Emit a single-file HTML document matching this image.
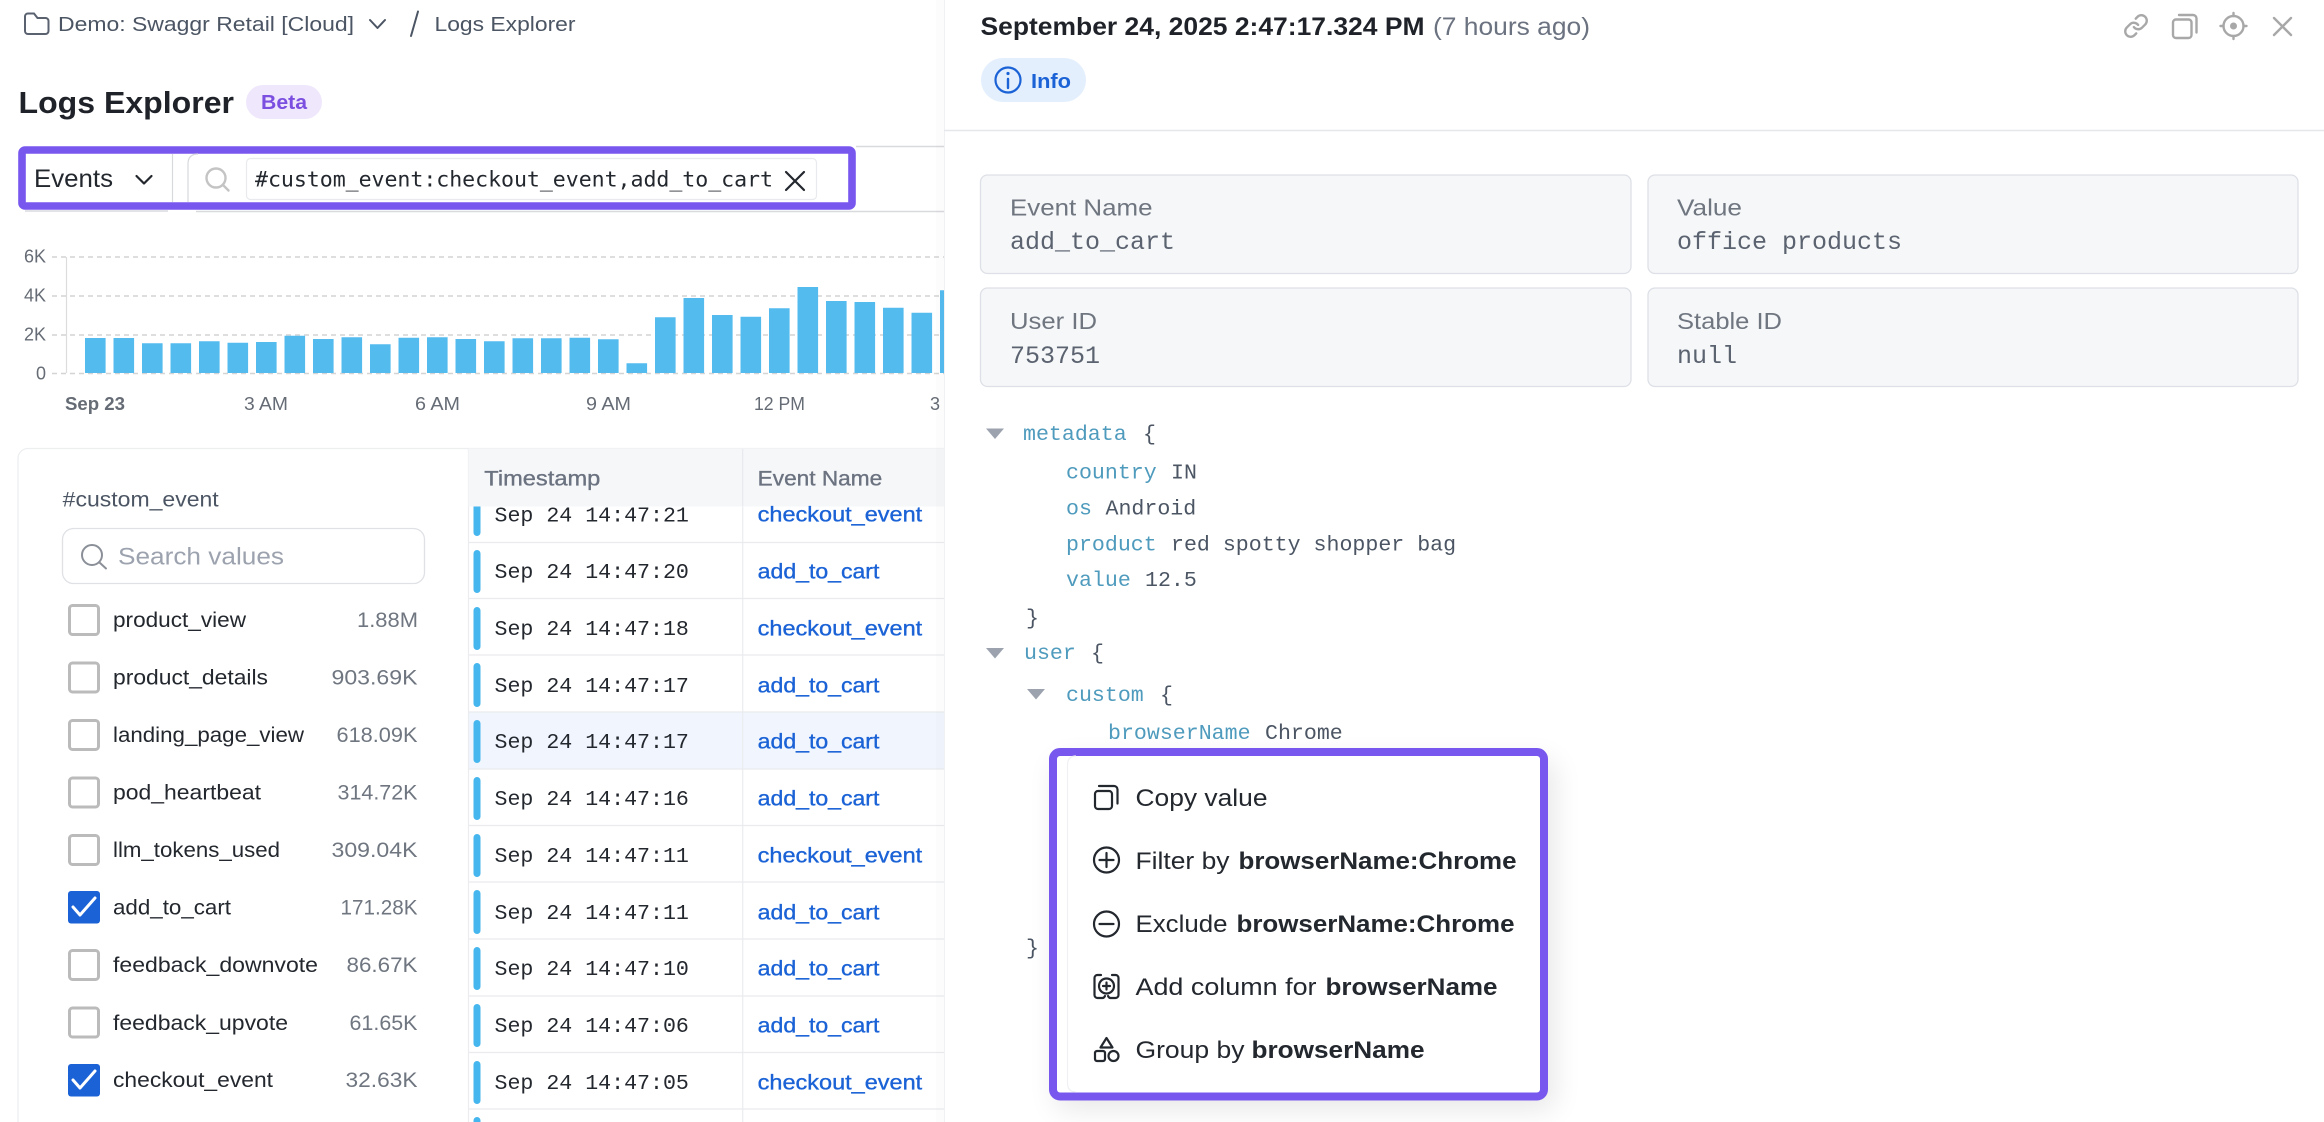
<!DOCTYPE html>
<html lang="en">
<head>
<meta charset="utf-8">
<title>Logs Explorer</title>
<style>
html,body{margin:0;padding:0;background:#fff;width:2324px;height:1122px;overflow:hidden}
svg{display:block}
text{font-family:"Liberation Sans",sans-serif;white-space:pre}
.m{font-family:"Liberation Mono",monospace;font-size:21.6px}
.tk{font-family:"DejaVu Sans Mono",monospace;font-size:21.6px}
.k{fill:#4f9bbd}.v{fill:#4b5563}
.t{fill:#23272e}.ev{fill:#1a62d6;font-size:21px;stroke:#1a62d6;stroke-width:.35}
.hd{fill:#6b7280;font-size:21px;stroke:#6b7280;stroke-width:.35}
.it{fill:#23272e;font-size:21px}.ct{fill:#6f7680;font-size:21px}
.lb{fill:#6f7680;font-size:23px}.vl{fill:#5b6370;font-family:"Liberation Mono",monospace;font-size:25px}
.mn{fill:#23272e;font-size:24px}.mb{fill:#23272e;font-size:24px;font-weight:700}
.ax{fill:#666c75;font-size:18px}
.ic{fill:none;stroke:#23272e;stroke-width:2.2;stroke-linecap:round;stroke-linejoin:round}
.tc{fill:none;stroke:#a8a8a8;stroke-width:2.4;stroke-linecap:round;stroke-linejoin:round}
</style>
</head>
<body>
<svg width="2324" height="1122" viewBox="0 0 2324 1122" xmlns="http://www.w3.org/2000/svg">
<defs><filter id="sh" x="-15%" y="-15%" width="130%" height="130%"><feGaussianBlur stdDeviation="14"/></filter></defs>
<rect width="2324" height="1122" fill="#fff"/>

<!-- breadcrumb -->
<path d="M25 16.500a3 3 0 0 1 3-3h6l3.500 4.500h8a3 3 0 0 1 3 3v10a3 3 0 0 1-3 3H28a3 3 0 0 1-3-3z" fill="none" stroke="#5a6270" stroke-width="2"/>
<text x="58" y="31" font-size="20" fill="#4b5563" textLength="296" lengthAdjust="spacingAndGlyphs">Demo: Swaggr Retail [Cloud]</text>
<path d="M370 20l7.500 8 7.500-8" fill="none" stroke="#4b5563" stroke-width="2" stroke-linecap="round" stroke-linejoin="round"/>
<path d="M411 36l7-24.500" stroke="#4b5563" stroke-width="2" stroke-linecap="round"/>
<text x="434.500" y="31" font-size="20" fill="#4b5563" textLength="141" lengthAdjust="spacingAndGlyphs">Logs Explorer</text>

<!-- title -->
<text x="18.500" y="113" font-size="31" font-weight="700" fill="#1f2329" textLength="215.500" lengthAdjust="spacingAndGlyphs">Logs Explorer</text>
<rect x="246" y="85" width="76" height="34" rx="17" fill="#efe7fb"/>
<text x="261" y="109" font-size="20" font-weight="700" fill="#7b4fe0" textLength="46" lengthAdjust="spacingAndGlyphs">Beta</text>

<!-- filter bar -->
<path d="M856 146.500H944M856 211.500H944M196 211.500H856M25 211H168" stroke="#d8dade" stroke-width="1.500" fill="none"/>
<rect x="22" y="150" width="830" height="56" rx="3" fill="#fff" stroke="#7857ee" stroke-width="7.600"/>
<path d="M172.500 154V202" stroke="#d7d9dd" stroke-width="1.200"/>
<path d="M198 154q-10 0-10 10v38" stroke="#d7d9dd" stroke-width="1.200" fill="none"/>
<text x="34" y="187" font-size="25" fill="#23272e" textLength="79" lengthAdjust="spacingAndGlyphs">Events</text>
<path d="M136.500 176l7.500 7.500 7.500-7.500" fill="none" stroke="#23272e" stroke-width="2.200" stroke-linecap="round" stroke-linejoin="round"/>
<circle cx="216" cy="178" r="9.500" fill="none" stroke="#c4c4c4" stroke-width="2.400"/>
<path d="M223 185l5.500 5.500" stroke="#c4c4c4" stroke-width="2.400" stroke-linecap="round"/>
<rect x="246.500" y="158.500" width="570" height="41" rx="4" fill="#fff" stroke="#e8eaed" stroke-width="1.200"/>
<text class="tk" x="255" y="186.500" fill="#23272e" textLength="518">#custom_event:checkout_event,add_to_cart</text>
<path d="M786 172l18 18M804 172l-18 18" stroke="#23272e" stroke-width="2.200" stroke-linecap="round"/>

<!-- chart -->
<g stroke="#d4d4d4" stroke-width="1.500" stroke-dasharray="5 4" fill="none">
<path d="M52 257H944M52 296H944M52 335H944M52 373.500H944"/>
</g>
<path d="M66.500 257V373" stroke="#dcdcdc" stroke-width="1.200"/>
<text x="46" y="262.500" class="ax" text-anchor="end">6K</text><text x="46" y="301.500" class="ax" text-anchor="end">4K</text><text x="46" y="340.500" class="ax" text-anchor="end">2K</text><text x="46" y="379.500" class="ax" text-anchor="end">0</text>
<path fill="#54bbef" d="M85 338h20.600V373H85zM113.500 338h20.600V373h-20.600zM142 343.300h20.600V373H142zM170.500 343.300h20.600V373h-20.600zM199 341.300h20.600V373H199zM227.500 342.700h20.600V373h-20.600zM256 342h20.600V373H256zM284.500 335.700h20.600V373h-20.600zM313 339h20.600V373H313zM341.500 337.300h20.600V373h-20.600zM370 344.300h20.600V373H370zM398.500 337.700h20.600V373h-20.600zM427 337.300h20.600V373H427zM455.500 339h20.600V373h-20.600zM484 341.300h20.600V373H484zM512.500 338.300h20.600V373h-20.600zM541 338.300h20.600V373H541zM569.500 337.700h20.600V373h-20.600zM598 339.300h20.600V373H598zM626.500 363.300h20.600V373h-20.600zM655 317.300h20.600V373H655zM683.500 298h20.600V373h-20.600zM712 315h20.600V373H712zM740.500 316.700h20.600V373h-20.600zM769 308.300h20.600V373H769zM797.500 287h20.600V373h-20.600zM826 301h20.600V373H826zM854.500 302h20.600V373h-20.600zM883 307.700h20.600V373H883zM911.500 312.700h20.600V373h-20.600zM940 290.300h20.600V373H940z"/>
<text class="ax" x="65" y="410" font-weight="700" textLength="60" lengthAdjust="spacingAndGlyphs">Sep 23</text>
<text class="ax" x="244" y="410" textLength="44" lengthAdjust="spacingAndGlyphs">3 AM</text>
<text class="ax" x="415" y="410" textLength="45" lengthAdjust="spacingAndGlyphs">6 AM</text>
<text class="ax" x="586" y="410" textLength="45" lengthAdjust="spacingAndGlyphs">9 AM</text>
<text class="ax" x="754" y="410" textLength="51" lengthAdjust="spacingAndGlyphs">12 PM</text>
<text class="ax" x="930" y="410">3</text>

<!-- facet panel -->
<path d="M945 448.500H28a10 10 0 0 0-10 10V1122" fill="none" stroke="#eceef0" stroke-width="1.300"/>
<text x="62.700" y="506.700" font-size="21" fill="#4b5563" textLength="156" lengthAdjust="spacingAndGlyphs">#custom_event</text>
<rect x="62.500" y="528.500" width="362" height="55" rx="11" fill="#fff" stroke="#dfe1e5" stroke-width="1.300"/>
<circle cx="92" cy="555" r="10" fill="none" stroke="#8b9098" stroke-width="2"/>
<path d="M99.500 562.500l6.500 6" stroke="#8b9098" stroke-width="2" stroke-linecap="round"/>
<text x="118" y="564.500" font-size="24" fill="#9ca3af" textLength="166" lengthAdjust="spacingAndGlyphs">Search values</text>

<g fill="#fff" stroke="#bbb" stroke-width="3">
<rect x="69.500" y="605.500" width="29" height="29" rx="3"/>
<rect x="69.500" y="663" width="29" height="29" rx="3"/>
<rect x="69.500" y="720.500" width="29" height="29" rx="3"/>
<rect x="69.500" y="778" width="29" height="29" rx="3"/>
<rect x="69.500" y="835.500" width="29" height="29" rx="3"/>
<rect x="69.500" y="950.500" width="29" height="29" rx="3"/>
<rect x="69.500" y="1008" width="29" height="29" rx="3"/>
</g>
<rect x="68" y="891" width="32" height="32.500" rx="3" fill="#1a62d6"/>
<rect x="68" y="1064" width="32" height="32.500" rx="3" fill="#1a62d6"/>
<path d="M73 907l7 8 15-17M73 1080l7 8 15-17" fill="none" stroke="#fff" stroke-width="3" stroke-linecap="round" stroke-linejoin="round"/>

<text class="it" x="113" y="627" textLength="133" lengthAdjust="spacingAndGlyphs">product_view</text>
<text class="it" x="113" y="684.500" textLength="155" lengthAdjust="spacingAndGlyphs">product_details</text>
<text class="it" x="113" y="742" textLength="191" lengthAdjust="spacingAndGlyphs">landing_page_view</text>
<text class="it" x="113" y="799.500" textLength="148" lengthAdjust="spacingAndGlyphs">pod_heartbeat</text>
<text class="it" x="113" y="857" textLength="167" lengthAdjust="spacingAndGlyphs">llm_tokens_used</text>
<text class="it" x="113" y="914.500" textLength="118" lengthAdjust="spacingAndGlyphs">add_to_cart</text>
<text class="it" x="113" y="972" textLength="205" lengthAdjust="spacingAndGlyphs">feedback_downvote</text>
<text class="it" x="113" y="1030" textLength="175" lengthAdjust="spacingAndGlyphs">feedback_upvote</text>
<text class="it" x="113" y="1087" textLength="160" lengthAdjust="spacingAndGlyphs">checkout_event</text>

<text class="ct" x="357" y="627" textLength="61" lengthAdjust="spacingAndGlyphs">1.88M</text>
<text class="ct" x="331.500" y="684.500" textLength="86" lengthAdjust="spacingAndGlyphs">903.69K</text>
<text class="ct" x="336.500" y="742" textLength="81" lengthAdjust="spacingAndGlyphs">618.09K</text>
<text class="ct" x="337.500" y="799.500" textLength="80" lengthAdjust="spacingAndGlyphs">314.72K</text>
<text class="ct" x="331.500" y="857" textLength="86" lengthAdjust="spacingAndGlyphs">309.04K</text>
<text class="ct" x="340.500" y="914.500" textLength="77" lengthAdjust="spacingAndGlyphs">171.28K</text>
<text class="ct" x="346.500" y="972" textLength="71" lengthAdjust="spacingAndGlyphs">86.67K</text>
<text class="ct" x="349.500" y="1030" textLength="68" lengthAdjust="spacingAndGlyphs">61.65K</text>
<text class="ct" x="345.500" y="1087" textLength="72" lengthAdjust="spacingAndGlyphs">32.63K</text>

<!-- table -->
<rect x="468.500" y="712" width="476" height="57" fill="#f1f6fe"/>
<path d="M468.500 448V1122M742.700 448V1122" stroke="#eaecef" stroke-width="1.200"/>
<g stroke="#e9ebee" stroke-width="1.300">
<path d="M468 542.500H945M468 598.500H945M468 655H945M468 712H945M468 769H945M468 825.500H945M468 882H945M468 939H945M468 996H945M468 1052.500H945M468 1109H945"/>
</g>
<g fill="#45b6ee">
<rect x="473.500" y="494" width="7" height="42" rx="3.500"/>
<rect x="473.500" y="550" width="7" height="43" rx="3.500"/>
<rect x="473.500" y="607" width="7" height="43" rx="3.500"/>
<rect x="473.500" y="663" width="7" height="44" rx="3.500"/>
<rect x="473.500" y="720" width="7" height="43" rx="3.500"/>
<rect x="473.500" y="777" width="7" height="43" rx="3.500"/>
<rect x="473.500" y="834" width="7" height="43" rx="3.500"/>
<rect x="473.500" y="890" width="7" height="44" rx="3.500"/>
<rect x="473.500" y="947" width="7" height="43" rx="3.500"/>
<rect x="473.500" y="1004" width="7" height="43" rx="3.500"/>
<rect x="473.500" y="1061" width="7" height="43" rx="3.500"/>
<rect x="473.500" y="1117" width="7" height="10" rx="3.500"/>
</g>
<rect x="468.500" y="448.500" width="476" height="58" fill="#f6f7f9"/>
<path d="M742.700 449V506" stroke="#e7e9ec" stroke-width="1.200"/>
<text class="hd" x="484.300" y="485.700" textLength="116" lengthAdjust="spacingAndGlyphs">Timestamp</text>
<text class="hd" x="757.700" y="485.700" textLength="124.500" lengthAdjust="spacingAndGlyphs">Event Name</text>

<text class="m t" x="494.500" y="521.500">Sep 24 14:47:21</text>
<text class="m t" x="494.500" y="578">Sep 24 14:47:20</text>
<text class="m t" x="494.500" y="635">Sep 24 14:47:18</text>
<text class="m t" x="494.500" y="692">Sep 24 14:47:17</text>
<text class="m t" x="494.500" y="748">Sep 24 14:47:17</text>
<text class="m t" x="494.500" y="805">Sep 24 14:47:16</text>
<text class="m t" x="494.500" y="862">Sep 24 14:47:11</text>
<text class="m t" x="494.500" y="919">Sep 24 14:47:11</text>
<text class="m t" x="494.500" y="975">Sep 24 14:47:10</text>
<text class="m t" x="494.500" y="1032">Sep 24 14:47:06</text>
<text class="m t" x="494.500" y="1089">Sep 24 14:47:05</text>

<text class="ev" x="757.700" y="521.700" textLength="164.500" lengthAdjust="spacingAndGlyphs">checkout_event</text>
<text class="ev" x="757.700" y="578.500" textLength="121.700" lengthAdjust="spacingAndGlyphs">add_to_cart</text>
<text class="ev" x="757.700" y="635.500" textLength="164.500" lengthAdjust="spacingAndGlyphs">checkout_event</text>
<text class="ev" x="757.700" y="692.500" textLength="121.700" lengthAdjust="spacingAndGlyphs">add_to_cart</text>
<text class="ev" x="757.700" y="748.500" textLength="121.700" lengthAdjust="spacingAndGlyphs">add_to_cart</text>
<text class="ev" x="757.700" y="805.500" textLength="121.700" lengthAdjust="spacingAndGlyphs">add_to_cart</text>
<text class="ev" x="757.700" y="862.500" textLength="164.500" lengthAdjust="spacingAndGlyphs">checkout_event</text>
<text class="ev" x="757.700" y="919.500" textLength="121.700" lengthAdjust="spacingAndGlyphs">add_to_cart</text>
<text class="ev" x="757.700" y="975.500" textLength="121.700" lengthAdjust="spacingAndGlyphs">add_to_cart</text>
<text class="ev" x="757.700" y="1032.500" textLength="121.700" lengthAdjust="spacingAndGlyphs">add_to_cart</text>
<text class="ev" x="757.700" y="1089.500" textLength="164.500" lengthAdjust="spacingAndGlyphs">checkout_event</text>

<!-- right panel -->
<rect x="936" y="0" width="8" height="1122" fill="#000" opacity=".012"/>
<rect x="944" y="0" width="1380" height="1122" fill="#fff"/>
<path d="M944.500 0V1122" stroke="#f0f1f3" stroke-width="1"/>
<text x="980.500" y="35" font-size="25" font-weight="700" fill="#1f2329" textLength="444" lengthAdjust="spacingAndGlyphs">September 24, 2025 2:47:17.324 PM</text>
<text x="1433" y="35" font-size="25" fill="#6b7280" textLength="157" lengthAdjust="spacingAndGlyphs">(7 hours ago)</text>

<!-- top icons -->
<g class="tc">
<g transform="translate(2123 13) scale(1.083)" stroke-width="2.200">
<path d="M10 13a5 5 0 0 0 7.540.540l3-3a5 5 0 0 0-7.070-7.070l-1.720 1.710"/>
<path d="M14 11a5 5 0 0 0-7.540-.540l-3 3a5 5 0 0 0 7.070 7.070l1.710-1.710"/>
</g>
<rect x="2173" y="19.500" width="18.500" height="18.500" rx="3"/>
<path d="M2179 15h14a3.500 3.500 0 0 1 3.500 3.500v14"/>
<circle cx="2233.500" cy="26" r="10"/>
<path d="M2233.500 13v3M2233.500 36v3M2220.500 26h3M2243.500 26h3"/>
<path d="M2274 18l17 17M2291 18l-17 17"/>
</g>
<circle cx="2233.500" cy="26" r="3.500" fill="#a8a8a8"/>

<!-- info -->
<rect x="981" y="58" width="105" height="44" rx="22" fill="#e3effd"/>
<circle cx="1008" cy="80" r="12.500" fill="none" stroke="#1a62d6" stroke-width="2.200"/>
<path d="M1008 79v9" stroke="#1a62d6" stroke-width="2.400" stroke-linecap="round"/>
<circle cx="1008" cy="73.500" r="1.600" fill="#1a62d6"/>
<text x="1031" y="88" font-size="20" font-weight="700" fill="#1a62d6" textLength="40" lengthAdjust="spacingAndGlyphs">Info</text>
<path d="M944 130.500H2324" stroke="#e5e7eb" stroke-width="1.500"/>

<!-- cards -->
<g fill="#f6f7f9" stroke="#dde0e6" stroke-width="1.300">
<rect x="980.500" y="175" width="650.500" height="98.500" rx="7"/>
<rect x="1648" y="175" width="650" height="98.500" rx="7"/>
<rect x="980.500" y="288" width="650.500" height="98.500" rx="7"/>
<rect x="1648" y="288" width="650" height="98.500" rx="7"/>
</g>
<text class="lb" x="1010" y="215.500" textLength="142.500" lengthAdjust="spacingAndGlyphs">Event Name</text>
<text class="vl" x="1010" y="249">add_to_cart</text>
<text class="lb" x="1677" y="215.500" textLength="65" lengthAdjust="spacingAndGlyphs">Value</text>
<text class="vl" x="1677" y="249">office products</text>
<text class="lb" x="1010" y="329" textLength="87" lengthAdjust="spacingAndGlyphs">User ID</text>
<text class="vl" x="1010" y="363">753751</text>
<text class="lb" x="1677" y="329" textLength="105" lengthAdjust="spacingAndGlyphs">Stable ID</text>
<text class="vl" x="1677" y="363">null</text>

<!-- json tree -->
<g fill="#9ca3af">
<path d="M986 428.500h18l-9 10.500z"/>
<path d="M986 648h18l-9 10.500z"/>
<path d="M1027 689h18l-9 10.500z"/>
</g>
<text class="m k" x="1023" y="440">metadata</text><text class="m v" x="1143" y="440">{</text>
<text class="m k" x="1066" y="478.500">country</text><text class="m v" x="1171" y="478.500">IN</text>
<text class="m k" x="1066" y="514.500">os</text><text class="m v" x="1105.500" y="514.500">Android</text>
<text class="m k" x="1066" y="550.500">product</text><text class="m v" x="1171" y="550.500">red spotty shopper bag</text>
<text class="m k" x="1066" y="586">value</text><text class="m v" x="1145" y="586">12.5</text>
<text class="m v" x="1026" y="624">}</text>
<text class="m k" x="1024" y="659">user</text><text class="m v" x="1091" y="659">{</text>
<text class="m k" x="1066" y="701">custom</text><text class="m v" x="1160" y="701">{</text>
<text class="m k" x="1108" y="739">browserName</text><text class="m v" x="1265" y="739">Chrome</text>
<text class="m v" x="1026" y="954">}</text>

<!-- menu -->
<rect x="1055" y="760" width="500" height="350" rx="10" fill="#000" opacity=".09" filter="url(#sh)"/>
<rect x="1053" y="752" width="491" height="344.500" rx="7" fill="#fff" stroke="#7857ee" stroke-width="8"/>
<path d="M1076 756q-8.500 0-8.500 9v318q0 9 8.500 9" fill="none" stroke="#eff0f3" stroke-width="1.200"/>

<g class="ic">
<rect x="1095" y="791" width="17" height="18" rx="3"/>
<path d="M1099 786h15a3.500 3.500 0 0 1 3.500 3.500v14"/>
<circle cx="1106.500" cy="860" r="12.500"/><path d="M1106.500 853v14M1099.500 860h14"/>
<circle cx="1106.500" cy="924" r="12.500"/><path d="M1099.500 924h14"/>
<path d="M1101 975h-3.500a3 3 0 0 0-3 3v17a3 3 0 0 0 3 3h5q1.500 0 2.500-2M1112 975h3.500a3 3 0 0 1 3 3v17a3 3 0 0 1-3 3h-5q-1.500 0-2.500-2"/>
<circle cx="1106.500" cy="986" r="7.500"/><path d="M1106.500 982.500v7M1103 986h7"/>
<path d="M1106.500 1038l6 9.500h-12z"/>
<rect x="1095" y="1051" width="10" height="10" rx="2"/>
<circle cx="1113.500" cy="1056" r="5"/>
</g>

<text class="mn" x="1135.500" y="806" textLength="132" lengthAdjust="spacingAndGlyphs">Copy value</text>
<text class="mn" x="1135.500" y="869" textLength="94" lengthAdjust="spacingAndGlyphs">Filter by</text>
<text class="mb" x="1238.500" y="869" textLength="278" lengthAdjust="spacingAndGlyphs">browserName:Chrome</text>
<text class="mn" x="1135.500" y="932" textLength="92" lengthAdjust="spacingAndGlyphs">Exclude</text>
<text class="mb" x="1236.500" y="932" textLength="278" lengthAdjust="spacingAndGlyphs">browserName:Chrome</text>
<text class="mn" x="1135.500" y="995" textLength="181" lengthAdjust="spacingAndGlyphs">Add column for</text>
<text class="mb" x="1325.500" y="995" textLength="172" lengthAdjust="spacingAndGlyphs">browserName</text>
<text class="mn" x="1135.500" y="1058" textLength="109" lengthAdjust="spacingAndGlyphs">Group by</text>
<text class="mb" x="1251.500" y="1058" textLength="173" lengthAdjust="spacingAndGlyphs">browserName</text>
</svg>
</body>
</html>
